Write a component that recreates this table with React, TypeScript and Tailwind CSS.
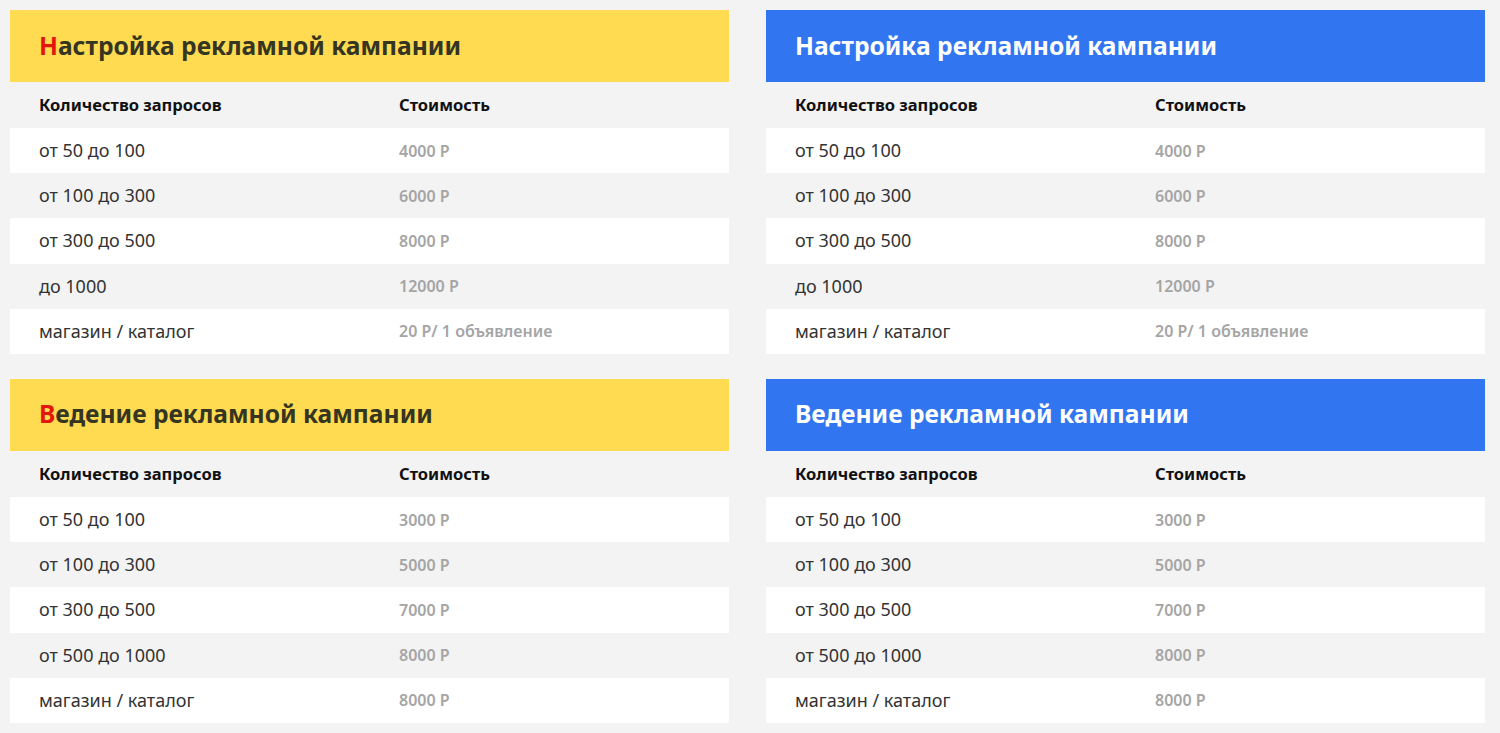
import React from "react";

type Row = { range: string; price: string };

const SETUP_ROWS: Row[] = [
  { range: "от 50 до 100", price: "4000 Р" },
  { range: "от 100 до 300", price: "6000 Р" },
  { range: "от 300 до 500", price: "8000 Р" },
  { range: "до 1000", price: "12000 Р" },
  { range: "магазин / каталог", price: "20 Р/ 1 объявление" },
];

const MANAGE_ROWS: Row[] = [
  { range: "от 50 до 100", price: "3000 Р" },
  { range: "от 100 до 300", price: "5000 Р" },
  { range: "от 300 до 500", price: "7000 Р" },
  { range: "от 500 до 1000", price: "8000 Р" },
  { range: "магазин / каталог", price: "8000 Р" },
];

const PriceTable: React.FC<{ title: string; rows: Row[]; variant: "yellow" | "blue" }> = ({
  title,
  rows,
  variant,
}) => {
  const isYellow = variant === "yellow";
  return (
    <div className="flex flex-col">
      <div
        className={
          isYellow
            ? "flex h-[72px] items-center bg-[#fedb50] px-[29px]"
            : "flex h-[72px] items-center bg-[#3275f0] px-[29px]"
        }
      >
        <h2
          className={
            isYellow
              ? "text-[24.6px] font-bold text-[#353521]"
              : "text-[24.6px] font-bold text-white"
          }
        >
          {isYellow ? (
            <>
              <span className="text-[#e3160e]">{title[0]}</span>
              {title.slice(1)}
            </>
          ) : (
            title
          )}
        </h2>
      </div>
      <div className="grid h-[46px] grid-cols-[360px_1fr] items-center px-[29px] text-[16.5px] font-bold text-[#111]">
        <span>Количество запросов</span>
        <span>Стоимость</span>
      </div>
      {rows.map((row, index) => (
        <div
          key={row.range + index}
          className={
            index % 2 === 0
              ? "grid h-[45.2px] grid-cols-[360px_1fr] items-center bg-white px-[29px]"
              : "grid h-[45.2px] grid-cols-[360px_1fr] items-center px-[29px]"
          }
        >
          <span className="text-[18px] text-[#333]">{row.range}</span>
          <span className="text-[16px] font-semibold text-[#a5a5a5]">{row.price}</span>
        </div>
      ))}
    </div>
  );
};

export default function App() {
  return (
    <div className="min-h-[733px] bg-[#f3f3f3] pl-[10px] pt-[10px] font-['Noto_Sans',sans-serif]">
      <div className="grid w-[1475px] grid-cols-[719px_719px] gap-x-[37px] gap-y-[25px]">
        <PriceTable title="Настройка рекламной кампании" rows={SETUP_ROWS} variant="yellow" />
        <PriceTable title="Настройка рекламной кампании" rows={SETUP_ROWS} variant="blue" />
        <PriceTable title="Ведение рекламной кампании" rows={MANAGE_ROWS} variant="yellow" />
        <PriceTable title="Ведение рекламной кампании" rows={MANAGE_ROWS} variant="blue" />
      </div>
    </div>
  );
}
